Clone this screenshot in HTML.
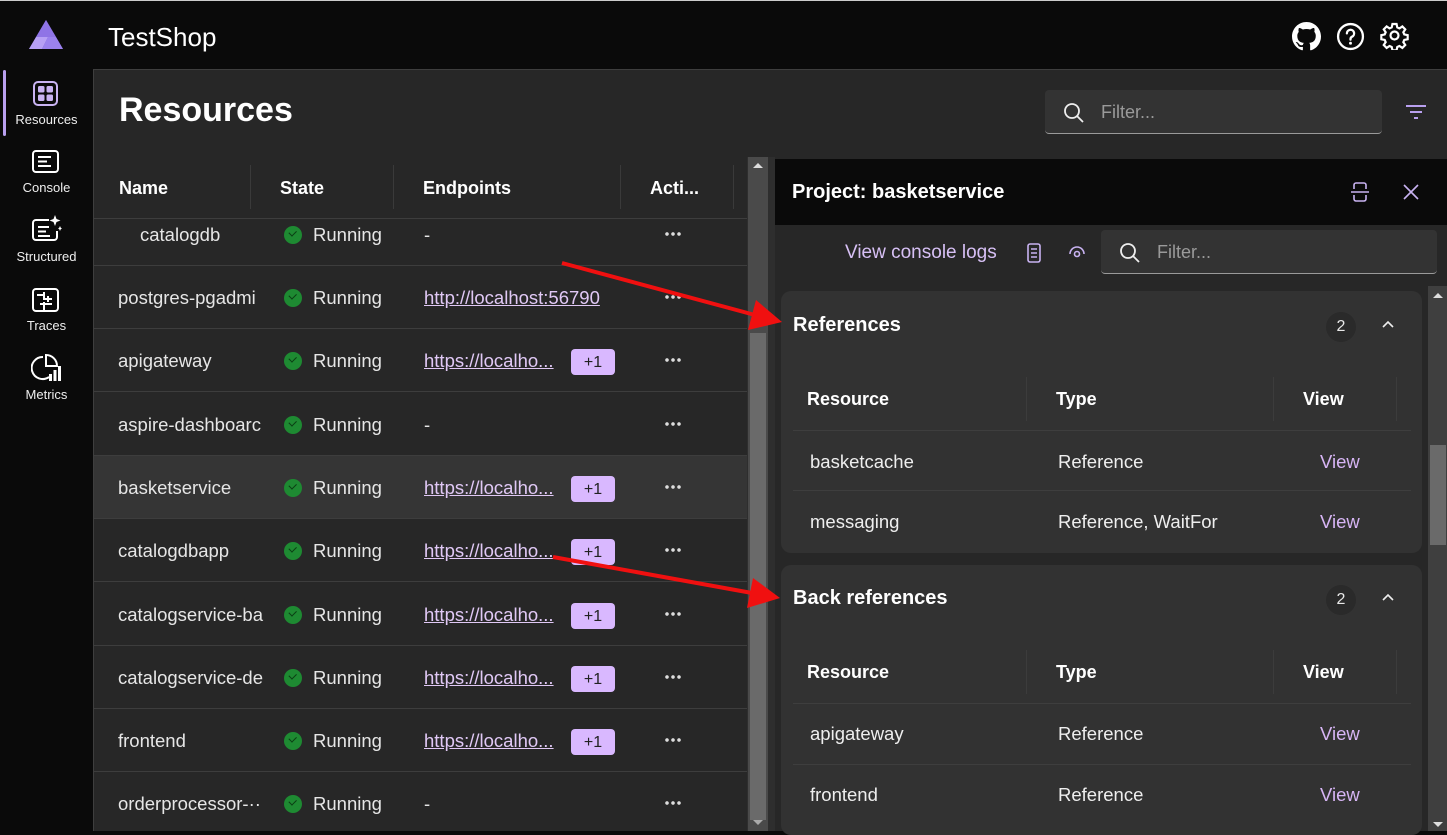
<!DOCTYPE html>
<html><head><meta charset="utf-8">
<style>
*{box-sizing:border-box;margin:0;padding:0}
body{width:1447px;height:831px;overflow:hidden;background:#0a0a0a;font-family:"Liberation Sans",sans-serif;color:#e8e8e8;position:relative}
.a{position:absolute;white-space:nowrap}
.row{position:absolute;left:94px;width:653px;border-bottom:1px solid #3d3d3d;font-size:18.5px;color:#e6e6e6}
.row span{position:absolute}
.chk{position:absolute;left:284px;width:18px;height:18px;border-radius:50%;background:#1e8a32}
.chk:after{content:"";position:absolute;left:5px;top:4px;width:6px;height:3.5px;border-left:1.5px solid #0b3d14;border-bottom:1.5px solid #0b3d14;transform:rotate(-45deg)}
.lnk{color:#e0c8f5;text-decoration:underline}
.badge{position:absolute;left:571px;width:44px;height:26px;background:#d9b8ff;border-radius:4px;color:#222;font-size:16px;text-align:center;line-height:28px}
.dots{position:absolute;left:570px;width:18px;height:4px;background:radial-gradient(circle,#ddd 1.6px,transparent 2px) 0 0/6px 4px repeat-x}
.card{position:absolute;left:781px;width:641px;background:#323232;border-radius:10px}
.th{font-weight:bold;font-size:18px;color:#fff}
.cell{font-size:18.5px;color:#eee}
.view{color:#d7b5f5;font-size:18.5px}
</style></head><body>
<div class="a" style="left:0;top:0;width:1447px;height:1px;background:#ccc"></div>
<svg class="a" style="left:28px;top:19px" width="36" height="32" viewBox="0 0 36 32">
<polygon points="18,1 35,30 1,30" fill="#6b4fc8"/>
<polygon points="18,1 28,18 8,18" fill="#8f74e6"/>
<polygon points="8,18 20,18 14,30 1,30" fill="#b7a0f5"/>
<polygon points="20,18 28,18 35,30 14,30" fill="#9b82ee"/>
</svg>
<div class="a" style="left:108px;top:22px;font-size:26px;color:#fff">TestShop</div>
<svg class="a" style="left:1292px;top:22px" width="29" height="29" viewBox="0 0 16 16"><path fill="#fff" d="M8 0C3.58 0 0 3.580 0 8c0 3.54 2.29 6.53 5.470 7.59.4.07.55-.17.55-.38 0-.19-.01-.82-.01-1.49-2.01.37-2.530-.49-2.69-.94-.09-.23-.48-.94-.82-1.130-.28-.15-.68-.52-.01-.53.63-.01 1.08.58 1.23.82.72 1.21 1.87.87 2.33.66.07-.52.28-.87.51-1.070-1.78-.2-3.64-.89-3.64-3.95 0-.87.31-1.59.82-2.15-.08-.2-.36-1.02.08-2.12 0 0 .67-.21 2.2.82.64-.18 1.32-.27 2-.27.68 0 1.36.09 2 .27 1.53-1.04 2.2-.82 2.2-.82.44 1.1.16 1.92.08 2.12.51.56.82 1.27.82 2.15 0 3.07-1.87 3.75-3.65 3.95.29.25.54.73.54 1.48 0 1.07-.01 1.93-.01 2.2 0 .21.15.46.55.38A8.013 8.013 0 0016 8c0-4.42-3.58-8-8-8z"/></svg>
<svg class="a" style="left:1336px;top:22px" width="29" height="29" viewBox="0 0 28 28"><circle cx="14" cy="14" r="12" fill="none" stroke="#fff" stroke-width="2.2"/><path d="M10.5 11a3.5 3.5 0 1 1 5 3.2c-1 .5-1.5 1.2-1.5 2.3v.5" fill="none" stroke="#fff" stroke-width="2.2" stroke-linecap="round"/><circle cx="14" cy="20.5" r="1.4" fill="#fff"/></svg>
<svg class="a" style="left:1380px;top:21px" width="29" height="29" viewBox="0 0 24 24"><path fill="none" stroke="#fff" stroke-width="1.8" d="M10.3 2.5h3.4l.6 2.8 1.8.8 2.4-1.6 2.4 2.4-1.6 2.4.8 1.8 2.8.6v3.4l-2.8.6-.8 1.8 1.6 2.4-2.4 2.4-2.4-1.6-1.8.8-.6 2.8h-3.4l-.6-2.8-1.8-.8-2.4 1.6-2.4-2.4 1.6-2.4-.8-1.8-2.8-.6v-3.4l2.8-.6.8-1.8-1.6-2.4 2.4-2.4 2.4 1.6 1.8-.8z"/><circle cx="12" cy="12" r="3.3" fill="none" stroke="#fff" stroke-width="1.8"/></svg>
<div class="a" style="left:3px;top:70px;width:3px;height:66px;background:#b9a0ef;border-radius:2px"></div>
<svg class="a" style="left:33px;top:81px" width="25" height="25" viewBox="0 0 25 25"><rect x="1" y="1" width="23" height="23" rx="4" fill="none" stroke="#c9b3f2" stroke-width="2"/><rect x="5" y="5" width="6.5" height="6.5" rx="1.5" fill="#c9b3f2"/><rect x="13.5" y="5" width="6.5" height="6.5" rx="1.5" fill="#c9b3f2"/><rect x="5" y="13.5" width="6.5" height="6.5" rx="1.5" fill="#c9b3f2"/><rect x="13.5" y="13.5" width="6.5" height="6.5" rx="1.5" fill="#c9b3f2"/></svg>
<div class="a" style="left:0;width:93px;text-align:center;top:112px;font-size:13px;color:#eee">Resources</div>
<svg class="a" style="left:32px;top:150px" width="27" height="23" viewBox="0 0 27 23"><rect x="1" y="1" width="25" height="21" rx="3" fill="none" stroke="#fff" stroke-width="2"/><path d="M6 7h13M6 11.5h9M6 16h13" stroke="#fff" stroke-width="2"/></svg>
<div class="a" style="left:0;width:93px;text-align:center;top:180px;font-size:13px;color:#eee">Console</div>
<svg class="a" style="left:32px;top:214px" width="30" height="28" viewBox="0 0 30 28"><path d="M17 6H4a3 3 0 0 0-3 3v14a3 3 0 0 0 3 3h18a3 3 0 0 0 3-3v-6" fill="none" stroke="#fff" stroke-width="2"/><path d="M6 13h11M6 17.5h8M6 22h12" stroke="#fff" stroke-width="2"/><path d="M23 1l1.5 4 4 1.5-4 1.5-1.5 4-1.5-4-4-1.5 4-1.5z" fill="#fff"/><path d="M28 12l.8 1.8 1.2.7-1.2.6-.8 1.9-.8-1.9-1.2-.6 1.2-.7z" fill="#fff"/></svg>
<div class="a" style="left:0;width:93px;text-align:center;top:249px;font-size:13px;color:#eee">Structured</div>
<svg class="a" style="left:32px;top:288px" width="27" height="24" viewBox="0 0 27 24"><rect x="1" y="1" width="25" height="22" rx="3" fill="none" stroke="#fff" stroke-width="2"/><path d="M5 7h7M12 4v8M12 11h8M16 8v6M8 16h12M12 14v8" stroke="#fff" stroke-width="2"/></svg>
<div class="a" style="left:0;width:93px;text-align:center;top:318px;font-size:13px;color:#eee">Traces</div>
<svg class="a" style="left:31px;top:353px" width="30" height="30" viewBox="0 0 30 30"><path d="M12 4a11 11 0 1 0 6 20" fill="none" stroke="#fff" stroke-width="2"/><path d="M15 2v11h11A11 11 0 0 0 15 2z" fill="none" stroke="#fff" stroke-width="2"/><rect x="18" y="21" width="3" height="7" fill="#fff"/><rect x="22.5" y="17" width="3" height="11" fill="#fff"/><rect x="27" y="13" width="3" height="15" fill="#fff"/></svg>
<div class="a" style="left:0;width:93px;text-align:center;top:387px;font-size:13px;color:#eee">Metrics</div>
<div class="a" style="left:93px;top:69px;width:1354px;height:762px;background:#272727;border-top:1px solid #3e3e3e;border-left:1px solid #3e3e3e"></div>
<div class="a" style="left:119px;top:91px;font-size:34px;font-weight:bold;color:#fff">Resources</div>
<div class="a" style="left:1045px;top:90px;width:337px;height:44px;background:#333;border-radius:4px;border-bottom:1px solid #9a9a9a"></div>
<svg class="a" style="left:1063px;top:102px" width="22" height="22" viewBox="0 0 22 22"><circle cx="9" cy="9" r="7" fill="none" stroke="#eee" stroke-width="1.8"/><path d="M14 14l6 6" stroke="#eee" stroke-width="1.8"/></svg>
<div class="a" style="left:1101px;top:102px;font-size:18px;color:#9a9a9a">Filter...</div>
<svg class="a" style="left:1405px;top:104px" width="22" height="16" viewBox="0 0 22 16"><path d="M1 2h20M5 8h12M9 14h4" stroke="#b9a0ef" stroke-width="2"/></svg>
<div class="a th" style="left:119px;top:178px">Name</div>
<div class="a" style="left:250px;top:165px;width:1px;height:44px;background:#3a3a3a"></div>
<div class="a th" style="left:280px;top:178px">State</div>
<div class="a" style="left:393px;top:165px;width:1px;height:44px;background:#3a3a3a"></div>
<div class="a th" style="left:423px;top:178px">Endpoints</div>
<div class="a" style="left:620px;top:165px;width:1px;height:44px;background:#3a3a3a"></div>
<div class="a th" style="left:650px;top:178px">Acti...</div>
<div class="a" style="left:733px;top:165px;width:1px;height:44px;background:#3a3a3a"></div>
<div class="a" style="left:94px;top:218px;width:653px;height:1px;background:#3d3d3d"></div>
<div class="row" style="top:219px;height:47px"><span style="left:46px;top:5px">catalogdb</span><div class="chk" style="top:7px;left:190px"></div><span style="left:219px;top:5px">Running</span><span style="left:330px;top:5px">-</span><div class="dots" style="top:13px"></div></div>
<div class="row" style="top:266px;height:63px"><span style="left:24px;top:21px">postgres-pgadmi</span><div class="chk" style="top:23px;left:190px"></div><span style="left:219px;top:21px">Running</span><span class="lnk" style="left:330px;top:21px">http://localhost:56790</span><div class="dots" style="top:29px"></div></div>
<div class="row" style="top:329px;height:63px"><span style="left:24px;top:21px">apigateway</span><div class="chk" style="top:23px;left:190px"></div><span style="left:219px;top:21px">Running</span><span class="lnk" style="left:330px;top:21px">https://localho...</span><div class="badge" style="left:477px;top:20px">+1</div><div class="dots" style="top:29px"></div></div>
<div class="row" style="top:392px;height:64px"><span style="left:24px;top:22px">aspire-dashboarc</span><div class="chk" style="top:24px;left:190px"></div><span style="left:219px;top:22px">Running</span><span style="left:330px;top:22px">-</span><div class="dots" style="top:30px"></div></div>
<div class="row" style="top:456px;height:63px;background:#353535"><span style="left:24px;top:21px">basketservice</span><div class="chk" style="top:23px;left:190px"></div><span style="left:219px;top:21px">Running</span><span class="lnk" style="left:330px;top:21px">https://localho...</span><div class="badge" style="left:477px;top:20px">+1</div><div class="dots" style="top:29px"></div></div>
<div class="row" style="top:519px;height:63px"><span style="left:24px;top:21px">catalogdbapp</span><div class="chk" style="top:23px;left:190px"></div><span style="left:219px;top:21px">Running</span><span class="lnk" style="left:330px;top:21px">https://localho...</span><div class="badge" style="left:477px;top:20px">+1</div><div class="dots" style="top:29px"></div></div>
<div class="row" style="top:582px;height:64px"><span style="left:24px;top:22px">catalogservice-ba</span><div class="chk" style="top:24px;left:190px"></div><span style="left:219px;top:22px">Running</span><span class="lnk" style="left:330px;top:22px">https://localho...</span><div class="badge" style="left:477px;top:21px">+1</div><div class="dots" style="top:30px"></div></div>
<div class="row" style="top:646px;height:63px"><span style="left:24px;top:21px">catalogservice-de</span><div class="chk" style="top:23px;left:190px"></div><span style="left:219px;top:21px">Running</span><span class="lnk" style="left:330px;top:21px">https://localho...</span><div class="badge" style="left:477px;top:20px">+1</div><div class="dots" style="top:29px"></div></div>
<div class="row" style="top:709px;height:63px"><span style="left:24px;top:21px">frontend</span><div class="chk" style="top:23px;left:190px"></div><span style="left:219px;top:21px">Running</span><span class="lnk" style="left:330px;top:21px">https://localho...</span><div class="badge" style="left:477px;top:20px">+1</div><div class="dots" style="top:29px"></div></div>
<div class="row" style="top:772px;height:63px;border:none"><span style="left:24px;top:21px">orderprocessor-··</span><div class="chk" style="top:23px;left:190px"></div><span style="left:219px;top:21px">Running</span><span style="left:330px;top:21px">-</span><div class="dots" style="top:29px"></div></div>
<div class="a" style="left:747px;top:157px;width:28px;height:674px;background:#2e2e2e"></div>
<div class="a" style="left:748px;top:157px;width:20px;height:674px;background:#4a4a4a"></div>
<div class="a" style="left:750px;top:333px;width:16px;height:487px;background:#6a6a6a"></div>
<div class="a" style="left:753px;top:163px;width:0;height:0;border-left:5px solid transparent;border-right:5px solid transparent;border-bottom:5px solid #ddd"></div>
<div class="a" style="left:753px;top:820px;width:0;height:0;border-left:5px solid transparent;border-right:5px solid transparent;border-top:5px solid #aaa"></div>
<div class="a" style="left:775px;top:159px;width:672px;height:66px;background:#0a0a0a"></div>
<div class="a" style="left:792px;top:181px;font-size:20px;font-weight:bold;color:#fff">Project: basketservice</div>
<svg class="a" style="left:1350px;top:181px" width="20" height="22" viewBox="0 0 20 22"><path d="M4 8V4a2 2 0 0 1 2-2h8a2 2 0 0 1 2 2v4M4 14v4a2 2 0 0 0 2 2h8a2 2 0 0 0 2-2v-4M1 11h18" fill="none" stroke="#c9b3f2" stroke-width="1.6"/></svg>
<svg class="a" style="left:1402px;top:183px" width="18" height="18" viewBox="0 0 18 18"><path d="M2 2l14 14M16 2L2 16" stroke="#c9b3f2" stroke-width="1.6"/></svg>
<div class="a" style="left:845px;top:242px;font-size:19px;color:#d7c0f5">View console logs</div>
<svg class="a" style="left:1026px;top:243px" width="16" height="20" viewBox="0 0 16 20"><rect x="2" y="1" width="12" height="18" rx="2" fill="none" stroke="#c9b3f2" stroke-width="1.6"/><path d="M5 6h6M5 10h6M5 14h6" stroke="#c9b3f2" stroke-width="1.6"/></svg>
<svg class="a" style="left:1068px;top:245px" width="18" height="14" viewBox="0 0 18 14"><path d="M2 9a7 7 0 0 1 14 0" fill="none" stroke="#c9b3f2" stroke-width="1.6"/><circle cx="9" cy="9" r="2.5" fill="none" stroke="#c9b3f2" stroke-width="1.6"/></svg>
<div class="a" style="left:1101px;top:230px;width:336px;height:44px;background:#333;border-radius:4px;border-bottom:1px solid #9a9a9a"></div>
<svg class="a" style="left:1119px;top:242px" width="22" height="22" viewBox="0 0 22 22"><circle cx="9" cy="9" r="7" fill="none" stroke="#eee" stroke-width="1.8"/><path d="M14 14l6 6" stroke="#eee" stroke-width="1.8"/></svg>
<div class="a" style="left:1157px;top:242px;font-size:18px;color:#9a9a9a">Filter...</div>
<div class="a" style="left:1428px;top:286px;width:19px;height:545px;background:#3f3f3f"></div>
<div class="a" style="left:1430px;top:445px;width:16px;height:100px;background:#6a6a6a"></div>
<div class="a" style="left:1433px;top:293px;width:0;height:0;border-left:5px solid transparent;border-right:5px solid transparent;border-bottom:5px solid #ddd"></div>
<div class="a" style="left:1433px;top:822px;width:0;height:0;border-left:5px solid transparent;border-right:5px solid transparent;border-top:5px solid #ddd"></div>
<div class="card" style="top:291px;height:262px"></div>
<div class="card" style="top:565px;height:270px"></div>
<div class="a" style="left:793px;top:314px;font-size:20px;font-weight:bold;color:#fff">References</div>
<div class="a" style="left:1326px;top:312px;width:30px;height:30px;border-radius:50%;background:#2a2a2a;text-align:center;line-height:30px;font-size:16px">2</div>
<svg class="a" style="left:1381px;top:319px" width="14" height="10" viewBox="0 0 14 10"><path d="M2 8l5-5 5 5" fill="none" stroke="#eee" stroke-width="1.6"/></svg>
<div class="a th" style="left:807px;top:389px">Resource</div>
<div class="a" style="left:1026px;top:377px;width:1px;height:44px;background:#3c3c3c"></div>
<div class="a th" style="left:1056px;top:389px">Type</div>
<div class="a" style="left:1273px;top:377px;width:1px;height:44px;background:#3c3c3c"></div>
<div class="a th" style="left:1303px;top:389px">View</div>
<div class="a" style="left:1396px;top:377px;width:1px;height:44px;background:#3c3c3c"></div>
<div class="a" style="left:793px;top:430px;width:618px;height:1px;background:#3e3e3e"></div>
<div class="a cell" style="left:810px;top:451px">basketcache</div>
<div class="a cell" style="left:1058px;top:451px">Reference</div>
<div class="a view" style="left:1320px;top:451px">View</div>
<div class="a" style="left:793px;top:490px;width:618px;height:1px;background:#3e3e3e"></div>
<div class="a cell" style="left:810px;top:511px">messaging</div>
<div class="a cell" style="left:1058px;top:511px">Reference, WaitFor</div>
<div class="a view" style="left:1320px;top:511px">View</div>
<div class="a" style="left:793px;top:587px;font-size:20px;font-weight:bold;color:#fff">Back references</div>
<div class="a" style="left:1326px;top:585px;width:30px;height:30px;border-radius:50%;background:#2a2a2a;text-align:center;line-height:30px;font-size:16px">2</div>
<svg class="a" style="left:1381px;top:592px" width="14" height="10" viewBox="0 0 14 10"><path d="M2 8l5-5 5 5" fill="none" stroke="#eee" stroke-width="1.6"/></svg>
<div class="a th" style="left:807px;top:662px">Resource</div>
<div class="a" style="left:1026px;top:650px;width:1px;height:44px;background:#3c3c3c"></div>
<div class="a th" style="left:1056px;top:662px">Type</div>
<div class="a" style="left:1273px;top:650px;width:1px;height:44px;background:#3c3c3c"></div>
<div class="a th" style="left:1303px;top:662px">View</div>
<div class="a" style="left:1396px;top:650px;width:1px;height:44px;background:#3c3c3c"></div>
<div class="a" style="left:793px;top:703px;width:618px;height:1px;background:#3e3e3e"></div>
<div class="a cell" style="left:810px;top:723px">apigateway</div>
<div class="a cell" style="left:1058px;top:723px">Reference</div>
<div class="a view" style="left:1320px;top:723px">View</div>
<div class="a" style="left:793px;top:764px;width:618px;height:1px;background:#3e3e3e"></div>
<div class="a cell" style="left:810px;top:784px">frontend</div>
<div class="a cell" style="left:1058px;top:784px">Reference</div>
<div class="a view" style="left:1320px;top:784px">View</div>
<svg class="a" style="left:0;top:0" width="1447" height="831">
<line x1="562" y1="263" x2="755" y2="315" stroke="#f01010" stroke-width="4"/>
<polygon points="782,322 748,330 756,300" fill="#f01010"/>
<line x1="553" y1="557" x2="752" y2="593" stroke="#f01010" stroke-width="4"/>
<polygon points="780,598 747,608 753,578" fill="#f01010"/>
</svg>
</body></html>
